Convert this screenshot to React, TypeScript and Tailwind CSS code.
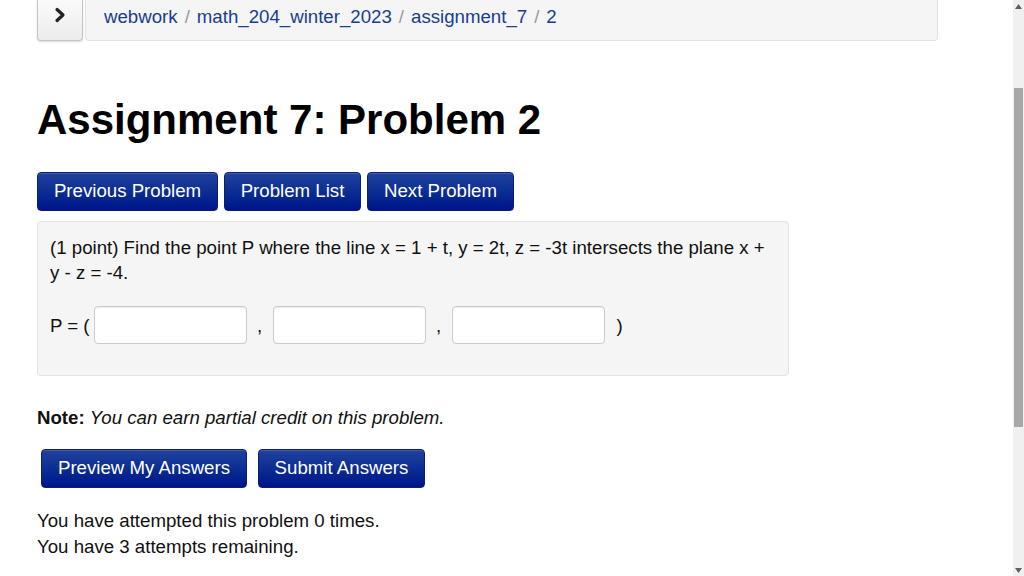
import React from 'react';

const navBtn =
  "h-[39px] flex items-center justify-center rounded-[4px] border border-[#0a1f74] bg-gradient-to-b from-[#20419b] to-[#00128a] text-white text-[18.67px] leading-none shadow-[inset_0_1px_0_rgba(255,255,255,0.15)]";

function Crumb({ label, last }: { label: string; last?: boolean }) {
  return (
    <>
      <span className="text-[#17408f]">{label}</span>
      {!last && <span className="px-[7px] text-[#999]">/</span>}
    </>
  );
}

function AnswerBox() {
  return <input type="text" className="w-[153px] h-[38px] rounded-[4px] border border-[#cccccc] bg-white shadow-[inset_0_1px_1px_rgba(0,0,0,0.075)] outline-none" />;
}

export default function App() {
  return (
    <div className="flex h-[576px] w-[1024px] overflow-hidden bg-white text-[#111] font-['Liberation_Sans',Arial,sans-serif]">
      <div className="flex-1 pl-[37px]">
        <div className="w-[901px]">
          {/* breadcrumb, scrolled slightly off the top */}
          <div className="flex h-[41px] gap-[2px]">
            <div className="w-[46px] h-full flex items-center justify-center rounded-b-[4px] border border-t-0 border-[#c4c4c4] bg-gradient-to-b from-[#fafafa] to-[#ececec] shadow-[0_1px_2px_rgba(0,0,0,0.15)]">
              <svg width="14" height="16" viewBox="0 0 14 16" className="mb-[10px]">
                <path d="M4 2.5 L10 8 L4 13.5" fill="none" stroke="#222" strokeWidth="3.2" strokeLinecap="round" strokeLinejoin="round" />
              </svg>
            </div>
            <div className="flex-1 h-full flex items-start pt-[5px] pl-[18px] rounded-b-[4px] border border-t-0 border-[#e3e3e3] bg-[#f5f5f5] text-[18.67px] leading-[24px]">
              <Crumb label="webwork" />
              <Crumb label="math_204_winter_2023" />
              <Crumb label="assignment_7" />
              <Crumb label="2" last />
            </div>
          </div>

          <h1 className="mt-[55px] text-[42px] leading-[48px] font-bold text-black">Assignment 7: Problem 2</h1>

          <div className="mt-[28px] flex gap-[6px]">
            <button className={navBtn + " w-[181px]"}>Previous Problem</button>
            <button className={navBtn + " w-[137px]"}>Problem List</button>
            <button className={navBtn + " w-[147px]"}>Next Problem</button>
          </div>

          <div className="mt-[10px] w-[752px] rounded-[4px] border border-[#e3e3e3] bg-[#f5f5f5] pt-[13px] pb-[31px] px-[12px] text-[18.67px] leading-[25px]">
            <p>(1 point) Find the point P where the line x = 1 + t, y = 2t, z = -3t intersects the plane x + y - z = -4.</p>
            <div className="mt-[21px] flex items-center">
              <span>P = (</span>
              <span className="ml-[4px]"><AnswerBox /></span>
              <span className="w-[26px] text-center">,</span>
              <AnswerBox />
              <span className="w-[26px] text-center">,</span>
              <AnswerBox />
              <span className="ml-[12px]">)</span>
            </div>
          </div>

          <p className="mt-[29px] text-[18.67px] leading-[26px]">
            <b>Note:</b> <i>You can earn partial credit on this problem.</i>
          </p>

          <div className="mt-[18px] ml-[4px] flex gap-[11px]">
            <button className={navBtn + " w-[206px]"}>Preview My Answers</button>
            <button className={navBtn + " w-[167px]"}>Submit Answers</button>
          </div>

          <div className="mt-[20px] text-[18.67px] leading-[26px]">
            <p>You have attempted this problem 0 times.</p>
            <p>You have 3 attempts remaining.</p>
          </div>
        </div>
      </div>

      {/* scrollbar */}
      <div className="w-[11px] h-full flex flex-col items-center bg-[#f0f0f0]">
        <div className="h-[12px] flex items-center justify-center">
          <svg width="7" height="5" viewBox="0 0 7 5"><path d="M0 5 L3.5 0 L7 5 Z" fill="#606060" /></svg>
        </div>
        <div className="mt-[76px] w-[9px] h-[339px] bg-[#a8a8a8]" />
        <div className="flex-1" />
        <div className="h-[12px] flex items-center justify-center">
          <svg width="7" height="5" viewBox="0 0 7 5"><path d="M0 0 L7 0 L3.5 5 Z" fill="#606060" /></svg>
        </div>
      </div>
    </div>
  );
}
